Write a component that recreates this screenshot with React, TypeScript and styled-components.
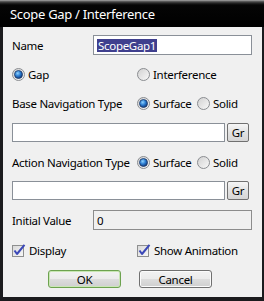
import React from "react";
import styled, { createGlobalStyle } from "styled-components";

/* ---------- globals ---------- */
const GlobalStyle = createGlobalStyle`
    html, body { margin: 0; padding: 0; background: #1a1a1a; }
    body { font-family: "Noto Sans", "Open Sans", sans-serif; }
`;

/* ---------- window frame ---------- */
const Window = styled.div`
    width: 264px;
    height: 301px;
    box-sizing: border-box;
    display: flex;
    flex-direction: column;
    background: #1b1b1e;
    padding: 0 2px 4px 3px;
`;

const TitleBar = styled.div`
    height: 27px;
    flex: none;
    margin: 0 -2px 0 -3px;
    padding-left: 10px;
    display: flex;
    align-items: center;
    background: linear-gradient(#b4b4b4 0px, #6a6a6a 1px, #262626 3px, #050505 5px, #000 100%);
    color: #fff;
    font-size: 13px;
    letter-spacing: -0.3px;
`;

const Body = styled.div`
    flex: 1;
    background: #f0f0f0;
    padding: 8px 10px 0 9px;
    display: flex;
    flex-direction: column;
    font-size: 11.5px;
    letter-spacing: -0.3px;
    color: #000;
`;

/* ---------- rows ---------- */
const Row = styled.div<{ $mt: number; $h: number }>`
    display: flex;
    align-items: center;
    margin-top: ${({ $mt }) => $mt}px;
    height: ${({ $h }) => $h}px;
`;

const Label = styled.span<{ $w: number }>`
    width: ${({ $w }) => $w}px;
    flex: none;
    white-space: nowrap;
`;

const TextBox = styled.div<{ $disabled?: boolean }>`
    flex: 1;
    align-self: stretch;
    box-sizing: border-box;
    border: 1px solid ${({ $disabled }) => ($disabled ? "#8c8c8c" : "#8a9098")};
    background: ${({ $disabled }) => ($disabled ? "#f0f0f0" : "#fff")};
    display: flex;
    align-items: center;
    padding-left: 3px;
`;

const Selected = styled.span`
    background: #3f3f8e;
    color: #fff;
    padding: 0 1px;
    line-height: 13px;
`;

const SmallButton = styled.div`
    width: 22px;
    height: 19px;
    box-sizing: border-box;
    margin: 0 3px 0 2px;
    border: 1px solid #707070;
    border-radius: 2px;
    background: linear-gradient(#f6f6f6, #e2e2e2 50%, #d6d6d6);
    display: flex;
    align-items: center;
    justify-content: center;
`;

const Option = styled.label<{ $w?: number }>`
    display: flex;
    align-items: center;
    gap: 3px;
    width: ${({ $w }) => ($w ? `${$w}px` : "auto")};
    flex: none;
    white-space: nowrap;
`;

const ButtonRow = styled.div`
    display: flex;
    gap: 18px;
    margin-top: 10px;
    padding-left: 36px;
`;

const PushButton = styled.div<{ $default?: boolean }>`
    width: 73px;
    height: 18px;
    box-sizing: border-box;
    border: 1px solid ${({ $default }) => ($default ? "#6da24f" : "#707070")};
    box-shadow: ${({ $default }) => ($default ? "inset 0 0 0 1px #c9e7b4" : "inset 0 0 0 1px #fbfbfb")};
    border-radius: 3px;
    background: linear-gradient(#f2f2f2, #ebebeb 50%, #dddddd 51%, #cfcfcf);
    display: flex;
    align-items: center;
    justify-content: center;
`;

/* ---------- drawn controls ---------- */
const Radio: React.FC<{ on?: boolean }> = ({ on }) => (
    <svg width="13" height="13" viewBox="0 0 13 13">
        <defs>
            <linearGradient id="rOff" x1="0" y1="0" x2="1" y2="1">
                <stop offset="0" stopColor="#d0d0d0" />
                <stop offset="1" stopColor="#fafafa" />
            </linearGradient>
            <radialGradient id="rOn" cx="0.4" cy="0.35" r="0.7">
                <stop offset="0" stopColor="#8fd3ff" />
                <stop offset="0.5" stopColor="#2a7bd0" />
                <stop offset="1" stopColor="#0d2f6e" />
            </radialGradient>
        </defs>
        <circle cx="6.5" cy="6.5" r="6" fill="url(#rOff)" stroke="#8a8d91" />
        {on && <circle cx="6.5" cy="6.5" r="4" fill="url(#rOn)" stroke="#1f3a66" strokeWidth="0.8" />}
    </svg>
);

const Check: React.FC = () => (
    <svg width="14" height="13" viewBox="0 0 14 13">
        <defs>
            <linearGradient id="cb" x1="0" y1="0" x2="1" y2="1">
                <stop offset="0" stopColor="#d8d8d8" />
                <stop offset="1" stopColor="#f8f8f8" />
            </linearGradient>
        </defs>
        <rect x="0.5" y="1.5" width="11" height="11" fill="url(#cb)" stroke="#8e8f8f" />
        <path d="M2.5 6.5 L5 10 L12.5 0.8" fill="none" stroke="#3b48b8" strokeWidth="2" strokeLinejoin="round" />
    </svg>
);

export default function App() {
    return (
        <>
            <GlobalStyle />
            <Window>
                <TitleBar>Scope Gap / Interference</TitleBar>
                <Body>
                    <Row $mt={0} $h={20}>
                        <Label $w={81}>Name</Label>
                        <TextBox>
                            <Selected>ScopeGap1</Selected>
                        </TextBox>
                    </Row>

                    <Row $mt={10} $h={19}>
                        <Option $w={125}>
                            <Radio on />
                            Gap
                        </Option>
                        <Option>
                            <Radio />
                            Interference
                        </Option>
                    </Row>

                    <Row $mt={10} $h={18}>
                        <Label $w={125}>Base Navigation Type</Label>
                        <Option $w={60}>
                            <Radio on />
                            Surface
                        </Option>
                        <Option>
                            <Radio />
                            Solid
                        </Option>
                    </Row>

                    <Row $mt={11} $h={19}>
                        <TextBox />
                        <SmallButton>Gr</SmallButton>
                    </Row>

                    <Row $mt={11} $h={18}>
                        <Label $w={125}>Action Navigation Type</Label>
                        <Option $w={60}>
                            <Radio on />
                            Surface
                        </Option>
                        <Option>
                            <Radio />
                            Solid
                        </Option>
                    </Row>

                    <Row $mt={10} $h={19}>
                        <TextBox />
                        <SmallButton>Gr</SmallButton>
                    </Row>

                    <Row $mt={10} $h={20}>
                        <Label $w={81}>Initial Value</Label>
                        <TextBox $disabled>0</TextBox>
                    </Row>

                    <Row $mt={11} $h={19}>
                        <Option $w={125}>
                            <Check />
                            Display
                        </Option>
                        <Option>
                            <Check />
                            Show Animation
                        </Option>
                    </Row>

                    <ButtonRow>
                        <PushButton $default>OK</PushButton>
                        <PushButton>Cancel</PushButton>
                    </ButtonRow>
                </Body>
            </Window>
        </>
    );
}
